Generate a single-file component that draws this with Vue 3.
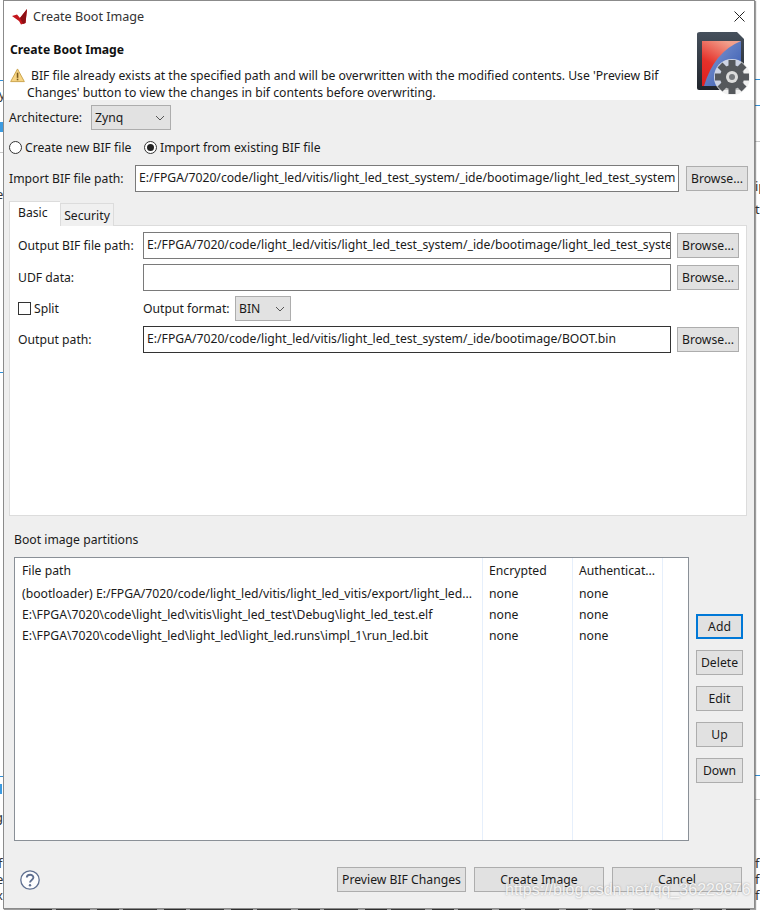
<script setup>
const columns = [
  { title: 'File path', cls: 'col-path', cells: ['(bootloader) E:/FPGA/7020/code/light_led/vitis/light_led_vitis/export/light_led...', 'E:\\FPGA\\7020\\code\\light_led\\vitis\\light_led_test\\Debug\\light_led_test.elf', 'E:\\FPGA\\7020\\code\\light_led\\light_led\\light_led.runs\\impl_1\\run_led.bit'] },
  { title: 'Encrypted', cls: 'col-small', cells: ['none', 'none', 'none'] },
  { title: 'Authenticat...', cls: 'col-small', cells: ['none', 'none', 'none'] },
  { title: '', cls: 'col-end', cells: [] }
]
const sideButtons = ['Add', 'Delete', 'Edit', 'Up', 'Down']
const gearTeeth = [0, 45, 90, 135, 180, 225, 270, 315]
const marks = [
  { cls: 'm-line', top: 80, left: 0, w: 3 }, { cls: 'm-block', top: 122, left: 0, w: 3 },
  { cls: 'm-gray', top: 152, left: 0, w: 3 }, { cls: 'm-line', top: 372, left: 0, w: 3 },
  { cls: 'm-line', top: 776, left: 0, w: 3 }, { cls: 'm-block', top: 784, left: 0, w: 2 },
  { cls: 'm-line', top: 79, left: 755, w: 5 }, { cls: 'm-line', top: 105, left: 755, w: 5 },
  { cls: 'm-gray', top: 141, left: 755, w: 5 }, { cls: 'm-line', top: 775, left: 755, w: 5 },
  { cls: 'm-gray', top: 799, left: 755, w: 5 }
]
const scraps = [
  { t: 'ty', top: 86, left: -6 }, { t: 'e', top: 186, left: -4 }, { t: 'g', top: 809, left: -5 },
  { t: 'f', top: 855, left: -2 }, { t: 'e', top: 871, left: -4 }, { t: 'x', top: 887, left: -4 },
  { t: 'ip', top: 178, left: 755 }, { t: 'th', top: 201, left: 755 },
  { t: 'f', top: 855, left: 755 }, { t: 'f', top: 871, left: 755 }, { t: 'f', top: 887, left: 755 }
]
</script>

<template>
  <div class="page">
    <div class="backdrop">
      <i v-for="(m, i) in marks" :key="i" :class="m.cls" :style="{ top: m.top + 'px', left: m.left + 'px', width: m.w + 'px' }"></i>
      <span v-for="(s, i) in scraps" :key="'s' + i" class="scrap" :style="{ top: s.top + 'px', left: s.left + 'px' }">{{ s.t }}</span>
      <div class="bottom-strip"></div>
    </div>

    <div class="dialog">
      <header class="head">
        <div class="titlebar">
          <svg class="app-icon" viewBox="0 0 16 16" width="16" height="16">
            <path d="M0 7 L5 5.5 L8 9 L15 0 L13.5 14 L9 15.5 L7 12 Z" fill="#c4161c" />
            <path d="M8 9 L15 0 L13.5 14 L11 15 Z" fill="#8e0f14" />
          </svg>
          <span class="title-text">Create Boot Image</span>
          <svg class="close" viewBox="0 0 11 11" width="11" height="11">
            <path d="M0.5 0.5 L10.5 10.5 M10.5 0.5 L0.5 10.5" stroke="#222" stroke-width="1" fill="none" />
          </svg>
        </div>
        <div class="banner">
          <div class="banner-text">
            <h1>Create Boot Image</h1>
            <div class="msg first">
              <svg viewBox="0 0 16 16" width="15" height="15">
                <path d="M8 1 L15.3 14.5 H0.7 Z" fill="#f7d483" stroke="#c9a24a" stroke-width="1" stroke-linejoin="round" />
                <rect x="7.2" y="5" width="1.7" height="5.5" fill="#7a5a1e" />
                <rect x="7.2" y="11.4" width="1.7" height="1.7" fill="#7a5a1e" />
              </svg>
              <span>BIF file already exists at the specified path and will be overwritten with the modified contents. Use 'Preview Bif</span>
            </div>
            <div class="msg second">Changes' button to view the changes in bif contents before overwriting.</div>
          </div>
          <svg class="logo" viewBox="0 0 52 64" width="52" height="64">
            <defs>
              <linearGradient id="card" x1="0" y1="0" x2="0" y2="1">
                <stop offset="0" stop-color="#46505c" /><stop offset="1" stop-color="#20252c" />
              </linearGradient>
              <linearGradient id="red" x1="0.6" y1="0" x2="0.1" y2="1">
                <stop offset="0" stop-color="#f2a08c" /><stop offset="0.55" stop-color="#e5312a" /><stop offset="1" stop-color="#e01f1f" />
              </linearGradient>
              <linearGradient id="blue" x1="0" y1="0" x2="1" y2="1">
                <stop offset="0" stop-color="#8aa0d6" /><stop offset="1" stop-color="#2f54ad" />
              </linearGradient>
            </defs>
            <path d="M3 0 H40 L47 7 V56 Q47 58 45 58 H2 Q0 58 0 56 V2 Q0 0 3 0 Z" fill="url(#card)" />
            <rect x="5" y="9" width="39" height="45" fill="url(#red)" />
            <path d="M44 9 Q17 20 7 54 H44 Z" fill="url(#blue)" />
            <g transform="translate(35 45)">
              <circle r="18" fill="#ececec" opacity="0.8" />
              <rect v-for="a in gearTeeth" :key="a" x="-3.5" y="-17" width="7" height="8" fill="#55585c" :transform="`rotate(${a})`" />
              <circle r="12" fill="#55585c" />
              <circle r="6" fill="#dcdcdc" />
              <circle r="3" fill="#777a7e" />
            </g>
          </svg>
        </div>
      </header>

      <main class="body">
        <div class="row arch">
          <span class="arch-label">Architecture:</span>
          <div class="select select-arch">
            <span>Zynq</span>
            <svg viewBox="0 0 10 6" width="10" height="6"><path d="M1 1 L5 5 L9 1" stroke="#555" fill="none" /></svg>
          </div>
        </div>

        <div class="row radios">
          <span class="radio"></span><span class="radio-label r1">Create new BIF file</span>
          <span class="radio on"></span><span class="radio-label">Import from existing BIF file</span>
        </div>

        <div class="row import">
          <span class="import-label">Import BIF file path:</span>
          <div class="field import-field">E:/FPGA/7020/code/light_led/vitis/light_led_test_system/_ide/bootimage/light_led_test_system</div>
          <button class="btn browse">Browse...</button>
        </div>

        <div class="tabs">
          <div class="tab active">Basic</div>
          <div class="tab">Security</div>
        </div>

        <section class="panel">
          <div class="form-row">
            <span class="form-label">Output BIF file path:</span>
            <div class="field form-field">E:/FPGA/7020/code/light_led/vitis/light_led_test_system/_ide/bootimage/light_led_test_system</div>
            <button class="btn browse">Browse...</button>
          </div>
          <div class="form-row">
            <span class="form-label">UDF data:</span>
            <div class="field form-field"></div>
            <button class="btn browse">Browse...</button>
          </div>
          <div class="form-row split-row">
            <span class="form-label split"><span class="check"></span>Split</span>
            <span class="fmt-label">Output format:</span>
            <div class="select select-fmt">
              <span>BIN</span>
              <svg viewBox="0 0 10 6" width="10" height="6"><path d="M1 1 L5 5 L9 1" stroke="#555" fill="none" /></svg>
            </div>
          </div>
          <div class="form-row">
            <span class="form-label">Output path:</span>
            <div class="field form-field dark">E:/FPGA/7020/code/light_led/vitis/light_led_test_system/_ide/bootimage/BOOT.bin</div>
            <button class="btn browse">Browse...</button>
          </div>
        </section>

        <div class="part-label">Boot image partitions</div>

        <div class="part-row">
          <div class="table">
            <div v-for="c in columns" :key="c.title" class="col" :class="c.cls">
              <div class="th">{{ c.title }}</div>
              <div v-for="(t, i) in c.cells" :key="i" class="td">{{ t }}</div>
            </div>
          </div>
          <div class="side">
            <button v-for="(b, i) in sideButtons" :key="b" class="btn side-btn" :class="{ focus: i === 0 }">{{ b }}</button>
          </div>
        </div>

        <footer class="foot">
          <svg class="help" viewBox="0 0 20 20" width="20" height="20">
            <circle cx="10" cy="10" r="9.2" fill="#fdfdfe" stroke="#5e6f90" stroke-width="1.3" />
            <path d="M6.8 7.6 C6.8 3.8 13.4 3.8 13.4 7.6 C13.4 10 10 10 10 12.6" fill="none" stroke="#5e6f90" stroke-width="1.9" />
            <circle cx="10" cy="15.2" r="1.2" fill="#5e6f90" />
          </svg>
          <div class="foot-btns">
            <button class="btn foot-btn">Preview BIF Changes</button>
            <button class="btn foot-btn">Create Image</button>
            <button class="btn foot-btn">Cancel</button>
          </div>
        </footer>
      </main>
    </div>

    <div class="watermark">https://blog.csdn.net/qq_36229876</div>
  </div>
</template>

<style scoped>
.page { position: relative; width: 760px; height: 910px; overflow: hidden; background: #fff; font: 12.2px "Noto Sans", "Open Sans", sans-serif; color: #1a1a1a; }
* { box-sizing: border-box; }
.backdrop { position: absolute; inset: 0; }
.backdrop i { position: absolute; display: block; }
.m-line { height: 1px; background: #2f8fd8; }
.m-block { height: 10px; background: #3d9be0; }
.m-gray { height: 1px; background: #c8c8c8; }
.scrap { position: absolute; font-size: 13px; line-height: 16px; color: #333; }
.bottom-strip { position: absolute; left: 30px; right: 10px; bottom: 0; height: 2px; background: repeating-linear-gradient(90deg, #222 0 22px, transparent 22px 26px, #333 26px 60px, transparent 60px 67px); }

.dialog { position: relative; margin-left: 3px; width: 752px; height: 909px; border: 1px solid #8b8b8b; background: #efefef; box-shadow: 1px 1px 1px rgba(60, 60, 60, .5); }

.head { background: #fff; height: 99px; }
.titlebar { height: 31px; padding: 0 9px 0 8px; display: flex; align-items: center; }
.app-icon { flex: none; }
.title-text { margin-left: 5px; flex: 1; color: #333; font-size: 12.6px; }
.banner { display: flex; justify-content: space-between; padding: 0 5px 0 6px; }
.banner-text { width: 680px; white-space: nowrap; }
h1 { margin: 8px 0 7px; font-size: 12.2px; line-height: 20px; font-weight: 700; color: #111; }
.msg { height: 17px; line-height: 17px; }
.msg.first { display: flex; align-items: center; }
.msg.first svg { flex: none; margin-right: 6px; }
.msg.second { padding-left: 17px; }
.logo { flex: none; overflow: visible; }

.body { display: flex; flex-direction: column; padding-top: 5px; }
.row { display: flex; align-items: center; padding-left: 5px; }
.arch { height: 25px; }
.arch-label { width: 82px; }
.select { height: 25px; background: #e2e2e2; border: 1px solid #adadad; display: flex; align-items: center; justify-content: space-between; padding: 0 5px 0 3px; }
.select-arch { width: 80px; }
.select-fmt { width: 56px; }
.radios { height: 18px; margin-top: 8px; }
.radio { flex: none; width: 13px; height: 13px; border: 1px solid #333; border-radius: 50%; background: #fff; display: block; position: relative; }
.radio.on::after { content: ""; position: absolute; inset: 2px; border-radius: 50%; background: #222; }
.radio-label { margin-left: 3px; }
.r1 { width: 119px; }
.import { height: 27px; margin-top: 9px; }
.import-label { width: 126px; }
.field { height: 27px; line-height: 23px; background: #fff; border: 1px solid #7a7a7a; padding: 0 3px; overflow: hidden; white-space: nowrap; }
.field.dark { border-color: #333; }
.import-field { width: 544px; }
.btn { font: inherit; color: #1a1a1a; height: 25px; padding: 0; background: #e1e1e1; border: 1px solid #adadad; white-space: nowrap; display: block; }
.browse { width: 62px; flex: none; }
.import .browse { margin-left: 7px; }

.tabs { display: flex; align-items: flex-end; height: 25px; margin: 9px 0 0 5px; position: relative; z-index: 1; }
.tab { height: 23px; width: 54px; background: #f0f0f0; border: 1px solid #dcdcdc; border-bottom: none; text-align: center; line-height: 23px; }
.tab.active { height: 25px; width: 51px; background: #fff; line-height: 21px; border-right: none; padding-left: 8px; text-align: left; }

.panel { width: 738px; height: 291px; margin: -1px 0 0 5px; background: #fff; border: 1px solid #dcdcdc; padding: 6px 0 0 8px; display: flex; flex-direction: column; gap: 5px; }
.form-row { display: flex; align-items: center; height: 27px; }
.split-row { height: 25px; }
.form-label { width: 125px; flex: none; }
.form-field { width: 528px; margin-right: 6px; flex: none; }
.split { display: flex; align-items: center; }
.check { width: 13px; height: 13px; border: 1px solid #333; background: #fff; margin-right: 3px; }
.fmt-label { width: 92px; }

.part-label { height: 18px; line-height: 18px; margin: 15px 0 0 10px; }
.part-row { display: flex; margin: 8px 0 0 10px; }
.table { width: 675px; height: 284px; border: 1px solid #8a9097; background: #fff; display: flex; }
.col { height: 100%; border-right: 1px solid #e6effb; white-space: nowrap; overflow: hidden; }
.col-path { width: 468px; }
.col-small { width: 90px; }
.col-end { flex: 1; border-right: none; }
.th { height: 25px; line-height: 25px; padding-left: 7px; background: #fff; }
.col-small .th, .col-small .td { padding-left: 6px; }
.td { height: 21px; line-height: 21px; padding-left: 7px; }
.side { display: flex; flex-direction: column; gap: 11px; margin: 57px 0 0 7px; }
.side-btn { width: 47px; }
.side-btn.focus { border: 2px solid #0078d7; }

.foot { display: flex; justify-content: space-between; align-items: center; height: 25px; margin-top: 26px; padding: 0 12px 0 16px; }
.foot-btns { display: flex; gap: 8px; }
.foot-btn { width: 130px; }
.foot-btn:first-child { width: 129px; }

.watermark { position: absolute; left: 505px; top: 881px; font: 16px "Liberation Sans", sans-serif; color: rgba(255, 255, 255, .85); text-shadow: 0 0 2px rgba(130, 130, 130, .7); white-space: nowrap; pointer-events: none; }
</style>
